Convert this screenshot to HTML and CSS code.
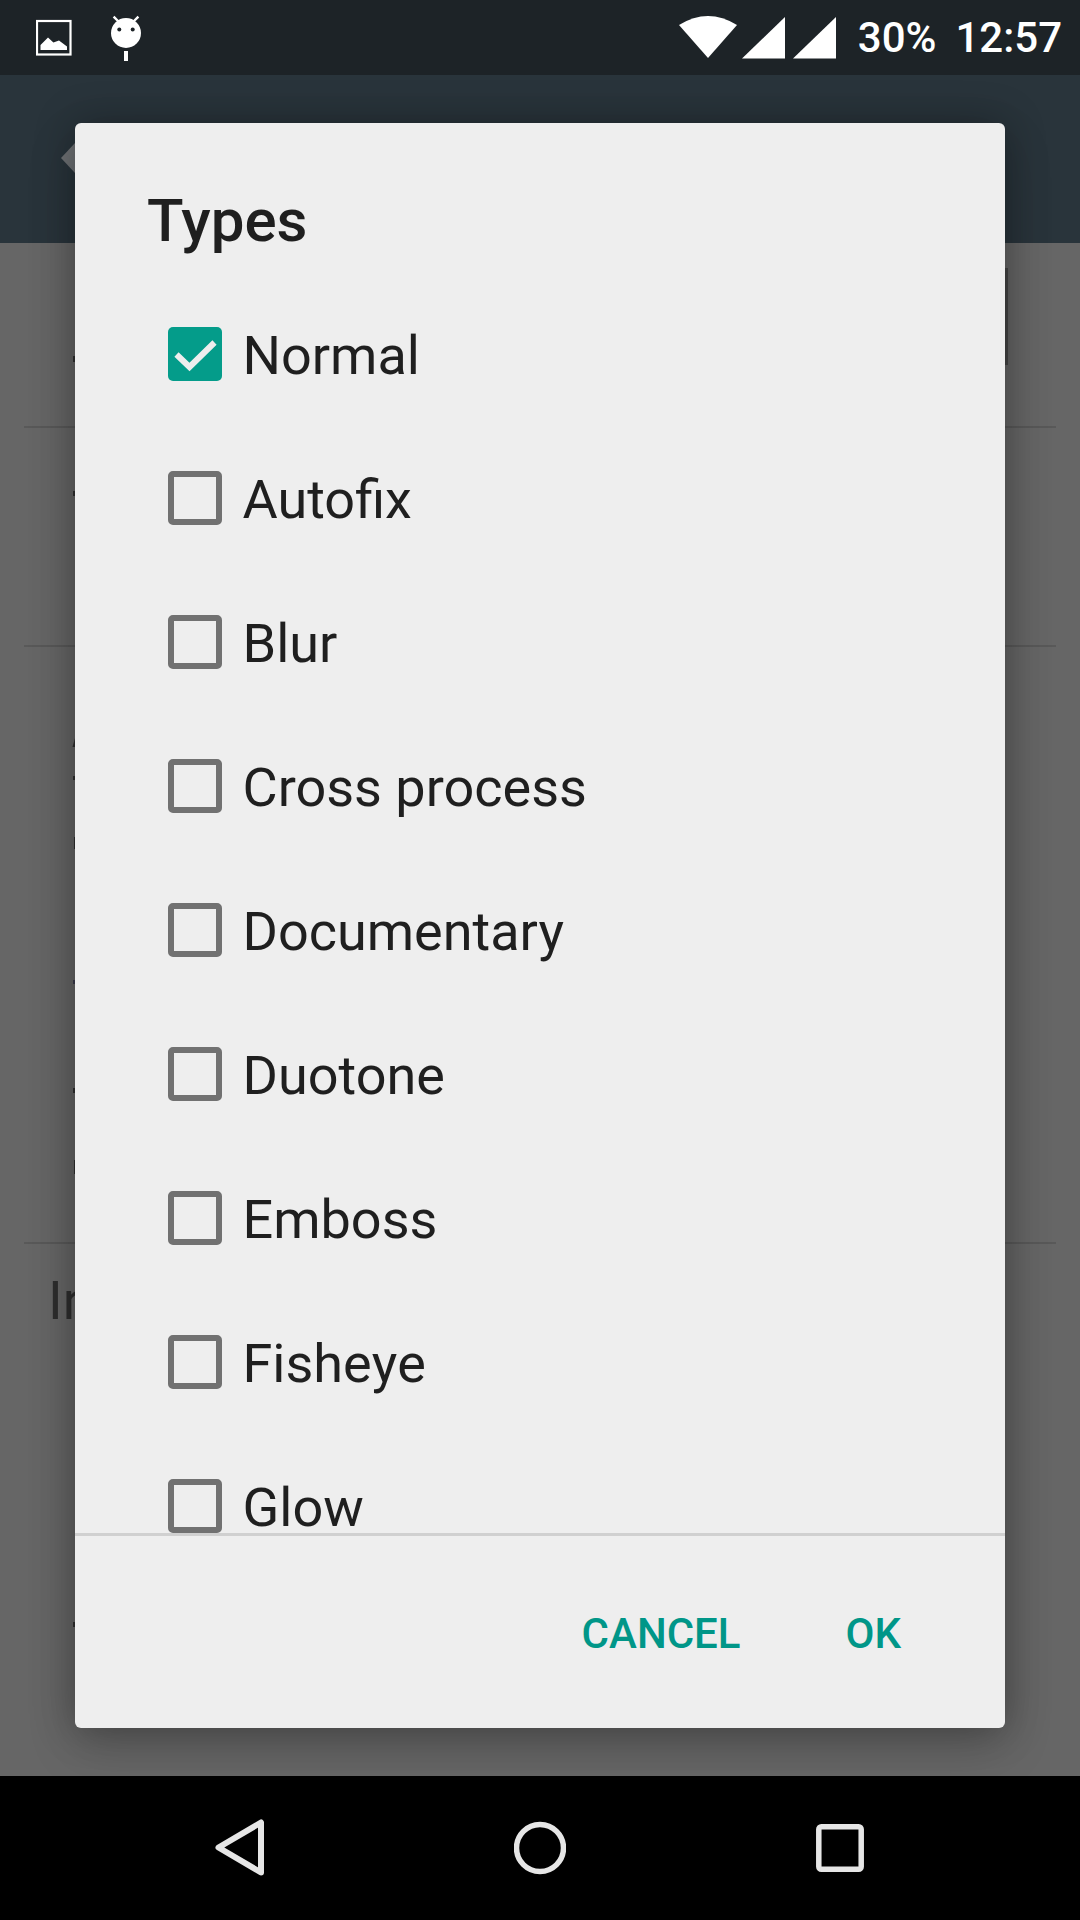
FILE: index.html
```html
<!DOCTYPE html>
<html lang="en">
<head>
<meta charset="utf-8">
<title>Types</title>
<link rel="stylesheet" href="styles.css">
</head>
<body>
<div class="screen">
  <header class="status">
    <svg class="ic ic-image" viewBox="36 0 36 75"><rect x="37" y="21" width="33.500" height="33.500" fill="none" stroke="#fff" stroke-width="2.200"/><path d="M40.500 50V45L48 37.500L53.400 42.500L59 40.500L67 46.500V50Z" fill="#fff"/></svg>
    <svg class="ic ic-droid" viewBox="111 0 31 75"><circle cx="126" cy="33" r="15" fill="#fff"/><path d="M113.600 16.700L119 22M138.400 16.700L133 22" stroke="#fff" stroke-width="2.400"/><rect x="124" y="51" width="4" height="10" fill="#fff"/><circle cx="119.300" cy="29.500" r="2" fill="#1d2327"/><circle cx="132.700" cy="29.500" r="2" fill="#1d2327"/></svg>
    <div class="status-right">
      <svg class="ic ic-wifi" viewBox="679 0 58 75"><path d="M679 25Q708 7 737 25L708 58Z" fill="#fff"/></svg>
      <svg class="ic ic-signal" viewBox="0 0 43 75"><path d="M0 58.500L43 17V58.500Z" fill="#fff"/></svg>
      <svg class="ic ic-signal" viewBox="0 0 43 75"><path d="M0 58.500L43 17V58.500Z" fill="#fff"/></svg>
      <span class="status-text battery">30%</span>
      <span class="status-text clock">12:57</span>
    </div>
  </header>

  <main class="main">
    <div class="appbar"></div>
    <div class="content">
      <section class="sec sec-a"></section>
      <section class="sec sec-b"></section>
      <section class="sec sec-c"></section>
      <section class="sec-d">In</section>
    </div>
    <svg class="peek" viewBox="0 75 1080 1701">
      <path d="M61 158L75 143V173Z" fill="#6f7275"/>
      <rect x="1005" y="268" width="3" height="97" fill="#454545"/>
      <g fill="#303030">
        <rect x="73" y="356" width="2" height="6"/>
        <rect x="73" y="491" width="2" height="5"/>
        <path d="M75 738V747H72.500Z"/>
        <rect x="73" y="776" width="2" height="4"/>
        <rect x="74" y="837" width="1" height="12"/>
        <rect x="73" y="980" width="2" height="4" fill="#3b3b4c"/>
        <rect x="73" y="1088" width="2" height="5"/>
        <rect x="74" y="1160" width="1" height="14"/>
        <rect x="73" y="1622" width="2" height="5"/>
      </g>
    </svg>

    <div class="dialog">
      <h1 class="title">Types</h1>
      <ul class="list">
        <li class="row">
          <svg class="box" viewBox="0 0 54 54"><rect width="54" height="54" rx="5" fill="#049c8a"/><path d="M8.500 27.500L21.500 40L46.500 15.500" fill="none" stroke="#eee" stroke-width="6"/></svg>
          <span class="label">Normal</span>
        </li>
        <li class="row"><span class="box box-off"></span><span class="label">Autofix</span></li>
        <li class="row"><span class="box box-off"></span><span class="label">Blur</span></li>
        <li class="row"><span class="box box-off"></span><span class="label">Cross process</span></li>
        <li class="row"><span class="box box-off"></span><span class="label">Documentary</span></li>
        <li class="row"><span class="box box-off"></span><span class="label">Duotone</span></li>
        <li class="row"><span class="box box-off"></span><span class="label">Emboss</span></li>
        <li class="row"><span class="box box-off"></span><span class="label label-loose">Fisheye</span></li>
        <li class="row"><span class="box box-off"></span><span class="label">Glow</span></li>
      </ul>
      <div class="actions">
        <span class="action">CANCEL</span>
        <span class="action">OK</span>
      </div>
    </div>
  </main>

  <nav class="nav">
    <svg class="nav-ic nav-back" viewBox="215 1776 50 144"><path d="M218.500 1847.500L261 1822.500V1872.500Z" fill="none" stroke="#e6e6e6" stroke-width="6" stroke-linejoin="round"/></svg>
    <svg class="nav-ic nav-home" viewBox="514 1776 52 144"><circle cx="540" cy="1848" r="23.500" fill="none" stroke="#e6e6e6" stroke-width="5.500"/></svg>
    <svg class="nav-ic nav-recent" viewBox="816 1776 48 144"><rect x="818.800" y="1826.800" width="42.400" height="42.400" rx="2.500" fill="none" stroke="#e6e6e6" stroke-width="5.500"/></svg>
  </nav>
</div>
</body>
</html>
```
FILE: styles.css
```css
* { box-sizing: border-box; }
html, body { margin: 0; padding: 0; background: #000; }
.screen {
  width: 1080px;
  height: 1920px;
  display: flex;
  flex-direction: column;
  overflow: hidden;
  font-family: Roboto, "Noto Sans", sans-serif;
}

/* status bar */
.status {
  position: relative;
  z-index: 2;
  height: 75px;
  flex: none;
  display: flex;
  background: #1d2327;
  padding-left: 36px;
}
.ic { height: 75px; display: block; flex: none; }
.ic-image { width: 36px; }
.ic-droid { width: 31px; margin-left: 39px; }
.status-right {
  margin-left: auto;
  display: flex;
  align-items: center;
  padding-right: 18px;
}
.ic-wifi { width: 58px; }
.ic-signal { width: 43px; margin-left: 5px; }
.ic-signal + .ic-signal { margin-left: 8px; }
.status-text {
  color: #fff;
  font-size: 42px;
  font-weight: 500;
  line-height: 75px;
}
.battery { margin-left: 22px; }
.clock { margin-left: 19px; }

/* page behind the dialog */
.main {
  position: relative;
  flex: 1;
  min-height: 0;
  overflow: hidden;
  display: flex;
  flex-direction: column;
  background: #666;
}
.appbar { height: 168px; flex: none; background: #29343b; }
.content { flex: 1; padding: 0 24px; }
.sec { border-bottom: 2px solid #595959; }
.sec-a { height: 185px; }
.sec-b { height: 219px; }
.sec-c { height: 597px; }
.sec-d {
  padding: 25px 0 0 24px;
  font-size: 54px;
  line-height: 64px;
  color: #2e2e2e;
}
.peek { position: absolute; left: 0; top: 0; width: 1080px; height: 1701px; }

/* dialog */
.dialog {
  position: absolute;
  left: 75px;
  top: 48px;
  width: 930px;
  height: 1605px;
  display: flex;
  flex-direction: column;
  background: #eee;
  border-radius: 6px;
  box-shadow: 0 0 40px rgba(0, 0, 0, 0.3), 0 20px 50px rgba(0, 0, 0, 0.15);
}
.title {
  flex: none;
  margin: 0;
  padding: 63px 72px 26px;
  font-size: 60px;
  font-weight: 500;
  line-height: 70px;
  color: #1f1f1f;
}
.list {
  flex: 1;
  min-height: 0;
  margin: 0;
  padding: 0 0 0 93px;
  list-style: none;
}
.row {
  height: 144px;
  display: flex;
  align-items: center;
  gap: 20.500px;
}
.row:last-child { height: 99px; align-items: flex-end; }
.box { width: 54px; height: 54px; flex: none; display: block; }
.box-off { border: 6px solid #717171; border-radius: 5px; }
.label {
  font-size: 54px;
  line-height: 50px;
  color: #1f1f1f;
  padding-top: 3px;
}
.label-loose { font-kerning: none; }
.actions {
  flex: none;
  height: 195px;
  padding: 3px 104px 0 0;
  border-top: 3px solid #d0d0d0;
  display: flex;
  align-items: center;
  justify-content: flex-end;
  gap: 105px;
}
.action {
  font-size: 42px;
  font-weight: 500;
  line-height: 50px;
  color: #009688;
}

/* navigation bar */
.nav {
  position: relative;
  z-index: 2;
  height: 144px;
  flex: none;
  display: flex;
  padding-left: 215px;
  background: #000;
}
.nav-ic { height: 144px; display: block; flex: none; }
.nav-back { width: 50px; }
.nav-home { width: 52px; margin-left: 249px; }
.nav-recent { width: 48px; margin-left: 250px; }
```
